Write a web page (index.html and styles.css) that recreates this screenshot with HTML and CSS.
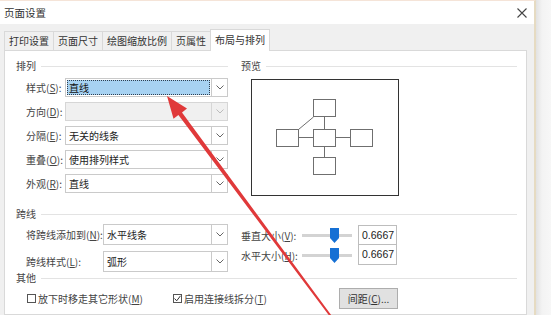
FILE: index.html
```html
<!DOCTYPE html>
<html lang="zh">
<head>
<meta charset="utf-8">
<title>页面设置</title>
<link rel="stylesheet" href="styles.css">
</head>
<body>
<div class="window">
  <div class="dialog">
    <div class="titlebar">
      <span class="title">页面设置</span>
      <svg class="close" width="10" height="10" viewBox="0 0 10 10"><path d="M0.5 0.5 L9.5 9.5 M9.5 0.5 L0.5 9.5" stroke="#444" stroke-width="1.1" fill="none"/></svg>
    </div>
    <div class="body">
      <div class="tabs">
        <div class="tab">打印设置</div>
        <div class="tab">页面尺寸</div>
        <div class="tab">绘图缩放比例</div>
        <div class="tab">页属性</div>
        <div class="tab active">布局与排列</div>
      </div>
      <div class="panel">
        <div class="top">
          <div class="col-left">
            <div class="heading">排列</div>
            <div class="form">
              <div class="row"><label>样式(<u>S</u>):</label>
                <div class="combo selected"><span class="val"><span class="sel">直线</span></span><span class="btn"><svg width="8" height="5" viewBox="0 0 8 5"><polyline points="0.5,0.5 4,4 7.5,0.5" fill="none" stroke="#666"/></svg></span></div></div>
              <div class="row"><label>方向(<u>D</u>):</label>
                <div class="combo disabled"><span class="val"></span><span class="btn"><svg width="8" height="5" viewBox="0 0 8 5"><polyline points="0.5,0.5 4,4 7.5,0.5" fill="none" stroke="#bbb"/></svg></span></div></div>
              <div class="row"><label>分隔(<u>E</u>):</label>
                <div class="combo"><span class="val">无关的线条</span><span class="btn"><svg width="8" height="5" viewBox="0 0 8 5"><polyline points="0.5,0.5 4,4 7.5,0.5" fill="none" stroke="#666"/></svg></span></div></div>
              <div class="row"><label>重叠(<u>O</u>):</label>
                <div class="combo"><span class="val">使用排列样式</span><span class="btn"><svg width="8" height="5" viewBox="0 0 8 5"><polyline points="0.5,0.5 4,4 7.5,0.5" fill="none" stroke="#666"/></svg></span></div></div>
              <div class="row"><label>外观(<u>R</u>):</label>
                <div class="combo"><span class="val">直线</span><span class="btn"><svg width="8" height="5" viewBox="0 0 8 5"><polyline points="0.5,0.5 4,4 7.5,0.5" fill="none" stroke="#666"/></svg></span></div></div>
            </div>
          </div>
          <div class="col-right">
            <div class="heading">预览</div>
            <div class="preview">
              <svg width="146" height="115" viewBox="0 0 146 115">
                <g fill="#fff" stroke="#6f6f6f" stroke-width="1">
                  <rect x="61.5" y="19.5" width="22" height="17"/>
                  <rect x="61.5" y="49.5" width="22" height="17"/>
                  <rect x="24.5" y="49.5" width="22" height="17"/>
                  <rect x="98.5" y="49.5" width="22" height="17"/>
                  <rect x="61.5" y="77.5" width="22" height="17"/>
                  <path d="M72.5 37 V49 M72.5 67 V77 M47 57.5 H61 M84 57.5 H98 M61.5 37 L46.5 49.5" fill="none"/>
                </g>
              </svg>
            </div>
          </div>
        </div>

        <div class="heading sec">跨线</div>
        <div class="jump">
          <div class="jump-left">
            <div class="jrow"><label>将跨线添加到(<u>N</u>):</label>
              <div class="combo"><span class="val">水平线条</span><span class="btn"><svg width="8" height="5" viewBox="0 0 8 5"><polyline points="0.5,0.5 4,4 7.5,0.5" fill="none" stroke="#666"/></svg></span></div></div>
            <div class="jrow"><label>跨线样式(<u>L</u>):</label>
              <div class="combo"><span class="val">弧形</span><span class="btn"><svg width="8" height="5" viewBox="0 0 8 5"><polyline points="0.5,0.5 4,4 7.5,0.5" fill="none" stroke="#666"/></svg></span></div></div>
          </div>
          <div class="jump-right">
            <div class="srow"><label>垂直大小(<u>V</u>):</label>
              <div class="slider"><span class="track"></span><svg class="thumb" width="9" height="15" viewBox="0 0 9 15"><path d="M0 0 H9 V10 L4.5 15 L0 10 Z" fill="#1670d4"/></svg></div>
              <div class="num">0.6667</div></div>
            <div class="srow"><label>水平大小(<u>H</u>):</label>
              <div class="slider"><span class="track"></span><svg class="thumb" width="9" height="15" viewBox="0 0 9 15"><path d="M0 0 H9 V10 L4.5 15 L0 10 Z" fill="#1670d4"/></svg></div>
              <div class="num">0.6667</div></div>
          </div>
        </div>

        <div class="heading sec2">其他</div>
        <div class="other">
          <div class="check"><span class="cb"></span>放下时移走其它形状(<u>M</u>)</div>
          <div class="check"><span class="cb"><svg width="7" height="7" viewBox="0 0 7 7"><polyline points="0.5,3.5 2.7,5.8 6.5,0.8" fill="none" stroke="#333" stroke-width="1"/></svg></span>启用连接线拆分(<u>T</u>)</div>
          <div class="button">间距(<u>C</u>)...</div>
        </div>
      </div>
    </div>
  </div>
  <div class="shadow"></div>
  <svg class="arrow" width="551" height="315" viewBox="0 0 551 315">
    <polygon points="167,96 187,108.5 182,112.6 336,321.6 334.4,322.6 178.4,115 173.5,118.8" fill="#e0393a"/>
  </svg>
</div>
</body>
</html>
```

FILE: styles.css
```css
* { box-sizing: border-box; }

body {
  margin: 0;
  width: 551px;
  height: 315px;
  overflow: hidden;
  font-family: "Noto Sans CJK SC", "Noto Sans", sans-serif;
  font-size: 10px;
  color: #333;
  background: #f4f4f4;
}

u { text-decoration: underline; text-underline-offset: 1px; }

.window {
  position: relative;
  display: flex;
  height: 315px;
}

.dialog {
  width: 536px;
  flex: none;
  background: #fff;
  border-top: 1px solid #f5e4d8;
  border-right: 2px solid #e6dbc2;
  display: flex;
  flex-direction: column;
}

.shadow {
  flex: 1;
  background: linear-gradient(to right, #e2e2e2, #f3f3f3 40%, #f7f7f7);
}

.titlebar {
  height: 23px;
  flex: none;
  display: flex;
  align-items: center;
  justify-content: space-between;
  padding: 0 7px 0 4px;
  font-size: 10.5px;
  color: #333;
}

.body {
  flex: 1;
  background: #f0f0f0;
  padding: 5px 7px 0 4px;
  display: flex;
  flex-direction: column;
}

.tabs {
  display: flex;
  align-items: flex-end;
  height: 21px;
  flex: none;
}

.tab {
  height: 19px;
  line-height: 18px;
  padding: 0 4px;
  border: 1px solid #d9d9d9;
  border-bottom: none;
  margin-right: -1px;
  color: #333;
  white-space: nowrap;
}

.tab.active {
  height: 22px;
  line-height: 20px;
  margin-bottom: -1px;
  background: #fff;
  position: relative;
  z-index: 1;
}

.panel {
  flex: 1;
  background: #fff;
  border: 1px solid #d9d9d9;
  padding: 9px 9px 0 11px;
}

.heading {
  display: flex;
  align-items: center;
  gap: 5px;
  height: 12px;
  line-height: 12px;
  color: #444;
}

.heading::after {
  content: "";
  flex: 1;
  height: 1px;
  background: #e3e3e3;
}

.top {
  display: flex;
  gap: 13px;
}

.col-left { width: 212px; flex: none; }
.col-right { flex: 1; }

.form {
  display: flex;
  flex-direction: column;
  margin-top: 3px;
}

.row {
  display: flex;
  align-items: center;
  height: 24px;
  padding-left: 10px;
}

.row label {
  width: 39px;
  flex: none;
  color: #444;
  white-space: nowrap;
}

.combo {
  flex: 1;
  height: 19px;
  border: 1px solid #cacaca;
  display: flex;
  background: #fff;
}

.combo .val {
  flex: 1;
  padding-left: 3px;
  line-height: 17px;
  color: #222;
}

.combo .btn {
  width: 16px;
  flex: none;
  border-left: 1px solid #cacaca;
  display: flex;
  align-items: center;
  justify-content: center;
}

.combo.selected .val {
  padding: 1px;
}

.combo.selected .sel {
  display: block;
  height: 100%;
  background: #a7d2f2;
  border: 1px dotted #2f3f50;
  padding-left: 1px;
  line-height: 13px;
  color: #111;
}

.combo.disabled {
  background: #f0f0f0;
  border-color: #d6d6d6;
}

.combo.disabled .btn { border-left-color: #d6d6d6; }

.preview {
  margin: 7px 0 0 10px;
  width: 148px;
  height: 117px;
  border: 1px solid #333;
}

.preview svg { display: block; }

.heading.sec { margin-top: 12px; }

.jump {
  display: flex;
  gap: 13px;
  margin-top: 4px;
}

.jump-left {
  width: 212px;
  flex: none;
  display: flex;
  flex-direction: column;
  gap: 6px;
}

.jrow {
  display: flex;
  align-items: center;
  height: 21px;
  padding-left: 10px;
}

.jrow label {
  width: 77px;
  flex: none;
  color: #444;
  white-space: nowrap;
}

.jrow .combo { height: 21px; }
.jrow .combo .val { line-height: 19px; }

.jump-right {
  display: flex;
  flex-direction: column;
  margin-top: 1px;
}

.srow {
  display: flex;
  align-items: center;
  height: 20px;
}

.srow label {
  width: 61px;
  flex: none;
  color: #444;
  white-space: nowrap;
}

.slider {
  width: 50px;
  height: 16px;
  position: relative;
  display: flex;
  align-items: center;
}

.slider .track {
  flex: 1;
  height: 3px;
  background: #d3d3d3;
}

.slider .thumb {
  position: absolute;
  left: 28px;
  top: 1px;
}

.num {
  margin-left: 6px;
  width: 39px;
  height: 20px;
  border: 1px solid #bdbdbd;
  padding-left: 3px;
  font-family: "Liberation Sans", Arial, sans-serif;
  font-size: 10.5px;
  line-height: 18px;
  color: #222;
}

.srow + .srow .num { border-top: none; line-height: 19px; }

.heading.sec2 { margin-top: 0; }

.other {
  display: grid;
  grid-template-columns: 146px 166px auto;
  align-items: center;
  height: 23px;
  margin-top: 3px;
  padding-left: 11px;
}

.check {
  display: flex;
  align-items: center;
  color: #444;
  white-space: nowrap;
}

.cb {
  width: 9px;
  height: 9px;
  flex: none;
  border: 1px solid #555;
  margin-right: 2px;
  display: flex;
  align-items: center;
  justify-content: center;
}

.button {
  width: 59px;
  height: 21px;
  background: #e1e1e1;
  border: 1px solid #adadad;
  text-align: center;
  line-height: 19px;
  color: #333;
}

.arrow {
  position: absolute;
  left: 0;
  top: 0;
  pointer-events: none;
}
```
